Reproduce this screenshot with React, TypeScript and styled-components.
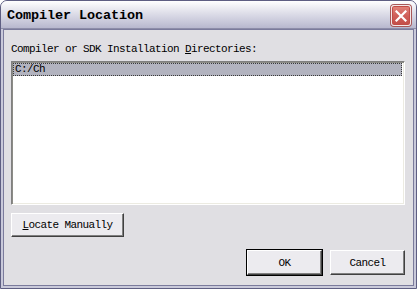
import React from 'react';
import styled, { createGlobalStyle } from 'styled-components';

const GlobalStyle = createGlobalStyle`
    html, body {
        margin: 0;
        padding: 0;
        background: #ffffff;
    }
    body {
        font-family: "Liberation Mono", "DejaVu Sans Mono", monospace;
    }
`;

export default function App() {
    return (
        <>
            <GlobalStyle />
            <Window>
                <TitleBar>
                    <Title>Compiler Location</Title>
                    <CloseButton aria-label="close">
                        <svg width="12" height="12" viewBox="0 0 12 12">
                            <path d="M1.5 1.5 L10.5 10.5 M10.5 1.5 L1.5 10.5" stroke="#ffffff" strokeWidth="2.2" strokeLinecap="square" />
                        </svg>
                    </CloseButton>
                </TitleBar>
                <Client>
                    <Label>
                        Compiler or SDK Installation <u>D</u>irectories:
                    </Label>
                    <ListBox>
                        <ListItem selected>C:/Ch</ListItem>
                    </ListBox>
                    <Button>
                        <u>L</u>ocate Manually
                    </Button>
                    <Footer>
                        <Button wide isDefault>OK</Button>
                        <Button wide>Cancel</Button>
                    </Footer>
                </Client>
            </Window>
        </>
    );
}


const Window = styled.div`
    width: 417px;
    height: 289px;
    box-sizing: border-box;
    display: flex;
    flex-direction: column;
    border: 1px solid #5e5e82;
    border-radius: 7px 7px 0 0;
    background: #c9c9da;
    overflow: hidden;
`;


const TitleBar = styled.div`
    height: 27px;
    flex-shrink: 0;
    display: flex;
    align-items: center;
    justify-content: space-between;
    padding: 0 4px 0 6px;
    background: linear-gradient(to bottom, #ffffff 0%, #ececf2 25%, #d4d4e2 60%, #b8b8ce 100%);
    border-bottom: 1px solid #8d8da8;
`;


const Title = styled.div`
    font-family: "Liberation Mono", monospace;
    font-weight: bold;
    font-size: 13.5px;
    letter-spacing: -0.1px;
    color: #000000;
    padding-top: 2px;
`;


const CloseButton = styled.div`
    width: 20px;
    height: 21px;
    box-sizing: border-box;
    display: flex;
    align-items: center;
    justify-content: center;
    border: 1px solid #f4e8e8;
    border-radius: 3px;
    background: linear-gradient(to bottom, #e2857c 0%, #d0605a 50%, #c24d48 100%);
    box-shadow: 0 0 0 1px #a85858, inset 0 0 0 1px #c24c46;
    margin-top: 2px;
    margin-right: 1px;
`;


const Client = styled.div`
    flex: 1;
    display: flex;
    flex-direction: column;
    align-items: flex-start;
    margin: 0 2px 2px 2px;
    border: 1px solid #7b7b9c;
    background: #e0dfe3;
    padding: 13px 8px 0 7px;
`;


const Label = styled.div`
    font-size: 11px;
    letter-spacing: -0.6px;
    line-height: 12px;
    color: #000000;
    height: 12px;
    u {
        text-decoration: underline;
    }
`;


const ListBox = styled.div`
    align-self: stretch;
    height: 144px;
    box-sizing: border-box;
    margin-top: 6px;
    background: #ffffff;
    border-top: 1px solid #808080;
    border-left: 1px solid #808080;
    border-right: 1px solid #ffffff;
    border-bottom: 1px solid #ffffff;
    box-shadow: inset 1px 1px 0 #8c8c86, inset -1px -1px 0 #ecebe2;
    padding: 1px 2px 0 1px;
`;


const ListItem = styled.div<{ selected?: boolean }>`
    height: 13px;
    box-sizing: border-box;
    font-size: 11px;
    letter-spacing: -0.6px;
    line-height: 11px;
    padding-left: 1px;
    color: #000000;
    background: ${p => (p.selected ? '#b2b3bf' : 'transparent')};
    border: 1px dotted ${p => (p.selected ? '#3a3a3a' : 'transparent')};
`;


const Button = styled.button<{ wide?: boolean; isDefault?: boolean }>`
    width: ${p => (p.wide ? '75px' : '113px')};
    height: ${p => (p.wide ? '25px' : '24px')};
    margin-top: ${p => (p.wide ? '0' : '8px')};
    box-sizing: border-box;
    padding: 0;
    font-family: "Liberation Mono", monospace;
    font-size: 11px;
    letter-spacing: -0.6px;
    color: #000000;
    background: #ecebef;
    border-top: 1px solid #ffffff;
    border-left: 1px solid #ffffff;
    border-right: 1px solid #404040;
    border-bottom: 1px solid #404040;
    box-shadow: inset -1px -1px 0 #808080;
    outline: ${p => (p.isDefault ? '1px solid #000000' : 'none')};
    outline-offset: 0;
    cursor: default;
    u {
        text-decoration: underline;
    }
`;


const Footer = styled.div`
    align-self: stretch;
    display: flex;
    justify-content: flex-end;
    gap: 8px;
    margin-top: 13px;
`;
